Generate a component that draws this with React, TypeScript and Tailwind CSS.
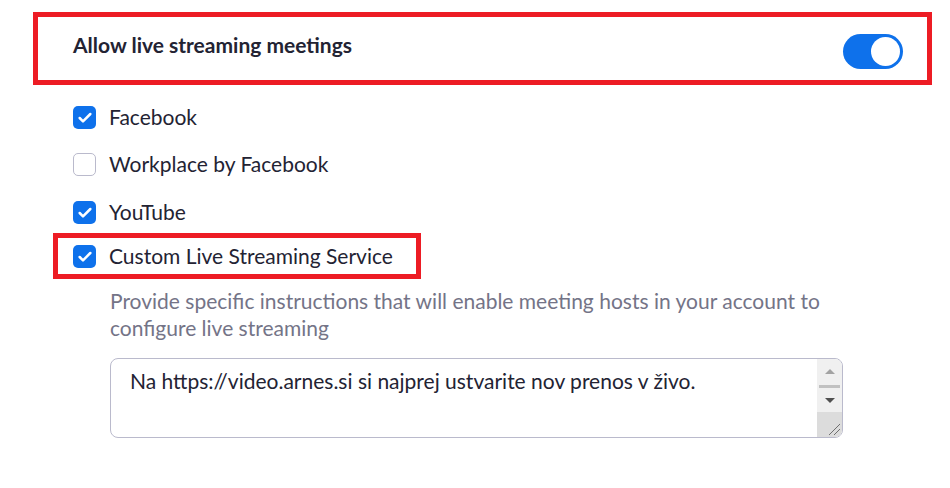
import { Check } from 'lucide-react';

const options = [
  { label: 'Facebook', checked: true, mt: 'mt-[20px]' },
  { label: 'Workplace by Facebook', checked: false, mt: 'mt-[23px]' },
  { label: 'YouTube', checked: true, mt: 'mt-[24px]' },
];

function Box({ checked }: { checked: boolean }) {
  return checked ? (
    <span className="flex h-[23px] w-[23px] items-center justify-center rounded-[5px] bg-[#0e71eb]">
      <Check size={16} strokeWidth={3.75} className="mt-[1px] text-white" />
    </span>
  ) : (
    <span className="h-[23px] w-[23px] rounded-[5px] border border-[#babacc] bg-white" />
  );
}

export default function App() {
  return (
    <div className="h-[488px] w-[950px] overflow-hidden bg-white pt-[12px] pl-[33px] font-['Lato','Noto_Sans',sans-serif] text-[#232333]">
      {/* header row */}
      <div className="flex h-[73px] w-[899px] items-center justify-between border-[5px] border-[#ed1c24] pl-[35px] pr-[24px]">
        <h2 className="-mt-[7px] text-[21px] font-bold">Allow live streaming meetings</h2>
        <div className="mt-[6px] flex h-[35px] w-[60px] items-center justify-end rounded-full bg-[#0e71eb] pr-[3px]">
          <span className="h-[29px] w-[29px] rounded-full bg-white" />
        </div>
      </div>

      {/* services */}
      <div className="pl-[40px]">
        {options.map((o) => (
          <div key={o.label} className={`${o.mt} flex h-[24px] items-center gap-[13px]`}>
            <Box checked={o.checked} />
            <span className="text-[21px]">{o.label}</span>
          </div>
        ))}
      </div>

      <div className="mt-[9px] ml-[20px] flex h-[46px] w-[368px] items-center gap-[13px] border-[5px] border-[#ed1c24] pl-[15px]">
        <Box checked />
        <span className="text-[21px]">Custom Live Streaming Service</span>
      </div>

      <div className="ml-[77px]">
        <p className="mt-[8px] w-[730px] text-[21px] leading-[27px] text-[#747487]">
          Provide specific instructions that will enable meeting hosts in your account to configure live streaming
        </p>

        <div className="mt-[17px] flex h-[80px] w-[733px] overflow-hidden rounded-[8px] border border-[#babacc]">
          <div className="flex-1 pl-[19px] pt-[10px] text-[21px] leading-[24px]">
            Na https://video.arnes.si si najprej ustvarite nov prenos v živo.
          </div>
          <div className="flex w-[25px] flex-col bg-[#f0f0f0]">
            <div className="flex flex-1 flex-col items-center pt-[10px]">
              <span className="h-0 w-0 border-x-[5px] border-b-[5px] border-x-transparent border-b-[#a3a3a3]" />
              <span className="mt-[11px] h-[3px] w-[21px] bg-[#c1c1c1]" />
              <span className="mt-[10px] h-0 w-0 border-x-[5px] border-t-[5px] border-x-transparent border-t-[#505050]" />
            </div>
            <div className="relative h-[25px] bg-[#dcdcdc]">
              <svg width="25" height="25" viewBox="0 0 25 25" className="absolute inset-0">
                <line x1="12" y1="23" x2="23" y2="12" stroke="#6e6e6e" strokeWidth="1" />
                <line x1="17" y1="23" x2="23" y2="17" stroke="#6e6e6e" strokeWidth="1" />
              </svg>
            </div>
          </div>
        </div>
      </div>
    </div>
  );
}
